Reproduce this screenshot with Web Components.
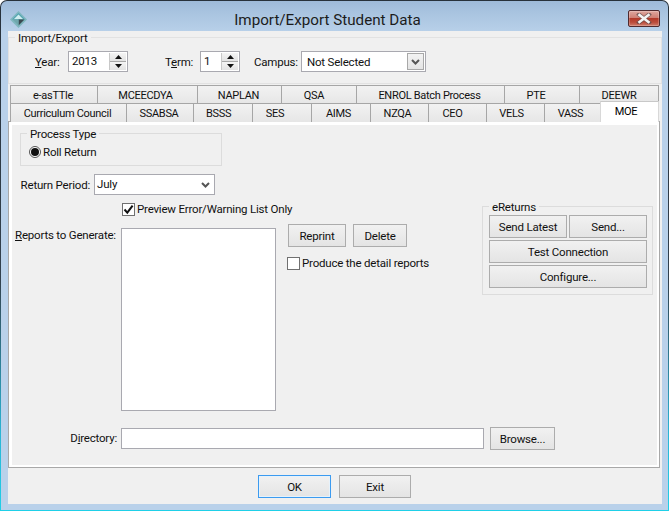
<!DOCTYPE html>
<html lang="en"><head><meta charset="utf-8"><title>Import/Export Student Data</title>
<style>
html,body{margin:0;padding:0;background:#fff}
body{font:11.5px/16px Roboto,"Open Sans",sans-serif;letter-spacing:-.2px;color:#111;width:670px;height:512px;overflow:hidden}
u{text-decoration:underline}
</style></head><body>
<x-window heading="Import/Export Student Data">
  <x-group legend="Import/Export" style="height:45px">
    <x-row style="padding:13px 0 0 26px">
      <x-label style="width:33px"><span><u>Y</u>ear:</span></x-label>
      <x-spin value="2013" style="width:60px"></x-spin>
      <x-label style="margin-left:37px;width:35px"><span>T<u>e</u>rm:</span></x-label>
      <x-spin value="1" style="width:40px"></x-spin>
      <x-label style="margin-left:14px;width:47px">Campus:</x-label>
      <x-combo value="Not Selected" boxed style="width:125px"></x-combo>
    </x-row>
  </x-group>
  <x-tabs style="margin-top:1px">
    <x-tab-row>
      <x-tab style="width:87px;padding-right:2px">e-asTTle</x-tab><x-tab style="width:100px;padding-right:4px">MCEECDYA</x-tab><x-tab style="width:84px;padding-right:2px">NAPLAN</x-tab><x-tab style="width:75px;padding-right:10px">QSA</x-tab><x-tab style="width:148px;padding-right:2px">ENROL Batch Process</x-tab><x-tab style="width:75px;padding-right:12px">PTE</x-tab><x-tab style="width:80px">DEEWR</x-tab>
    </x-tab-row>
    <x-tab-row>
      <x-tab style="width:116px;padding-right:2px">Curriculum Council</x-tab><x-tab style="width:67px;padding-right:2px">SSABSA</x-tab><x-tab style="width:59px;padding-right:9px">BSSS</x-tab><x-tab style="width:59px;padding-right:14px">SES</x-tab><x-tab style="width:59px;padding-right:5px">AIMS</x-tab><x-tab style="width:58px;padding-right:4px">NZQA</x-tab><x-tab style="width:58px;padding-right:10px">CEO</x-tab><x-tab style="width:58px;padding-right:8px">VELS</x-tab><x-tab style="width:56px;padding-right:4px">VASS</x-tab><x-tab active style="width:59px;padding-right:7px">MOE</x-tab>
    </x-tab-row>
  </x-tabs>
  <x-panel>
    <x-group legend="Process Type" style="margin:8px 0 0 8px;width:200px;height:31px;--line:#dcdcdc">
      <x-radio style="margin:11px 0 0 8px">Roll Return</x-radio>
    </x-group>
    <x-row style="margin-top:8px">
      <x-label style="width:78px;justify-content:flex-end;padding-right:4px">Return Period:</x-label>
      <x-combo value="July" style="width:121px"></x-combo>
    </x-row>
    <x-row style="margin-top:8px;align-items:flex-start">
      <x-col style="width:470px">
        <x-check checked style="margin-left:110px">Preview Error/Warning List Only</x-check>
        <x-row style="margin-top:8px;align-items:flex-start">
          <x-label style="width:106px;height:22px;padding-left:3px"><span><u>R</u>eports to Generate:</span></x-label>
          <x-box style="width:153px;height:181px;margin-top:4px"></x-box>
          <x-col style="margin-left:12px">
            <x-row>
              <x-button style="width:58px">Reprint</x-button>
              <x-button style="width:54px;margin-left:7px">Delete</x-button>
            </x-row>
            <x-check style="margin:10px 0 0 -1px">Produce the detail reports</x-check>
          </x-col>
        </x-row>
      </x-col>
      <x-group legend="eReturns" style="margin-top:3px;width:169px;height:87px;--line:#dcdcdc">
        <x-col style="padding:8px 5px 0 6px;gap:2px">
          <x-row style="gap:2px"><x-button style="width:78px">Send Latest</x-button><x-button style="width:78px">Send...</x-button></x-row>
          <x-button>Test Connection</x-button>
          <x-button>Configure...</x-button>
        </x-col>
      </x-group>
    </x-row>
    <x-row style="margin:16px 0 15px 0">
      <x-label style="width:105px;height:21px;padding-bottom:2px;justify-content:flex-end;padding-right:4px"><span>D<u>i</u>rectory:</span></x-label>
      <x-box style="width:361px;height:19px"></x-box>
      <x-button style="width:65px;margin-left:6px">Browse...</x-button>
    </x-row>
  </x-panel>
  <x-footer>
    <x-button default style="width:73px">OK</x-button>
    <x-button style="width:72px">Exit</x-button>
  </x-footer>
</x-window>
<script>
function define(name, css, html, extra){
  customElements.define(name, class extends HTMLElement{
    constructor(){
      super();
      const s=this.attachShadow({mode:"open"});
      s.innerHTML="<style>"+css+"</style>"+html;
    }
    connectedCallback(){ if(extra) extra(this,this.shadowRoot); }
  });
}
define("x-row",":host{display:flex;align-items:center}","<slot></slot>");
define("x-col",":host{display:flex;flex-direction:column}","<slot></slot>");
define("x-label",":host{display:flex;align-items:center;box-sizing:content-box;white-space:nowrap;flex:none}","<slot></slot>");

define("x-window",`
:host{display:block;box-sizing:border-box;width:669px;height:511px;padding:1px;border-radius:7px 7px 0 0;
 background:linear-gradient(#27313b 0,#33414e 55%,#2ab6d6 85%,#1fd0e8 100%)}
.frame{height:100%;box-sizing:border-box;border-radius:6px 6px 0 0;display:flex;flex-direction:column;padding:0 6px 6px 7px;
 background:linear-gradient(#9ebad9 0,#a9c4e0 12px,#b9d1ea 32px,#b9d1ea 100%)}
.bar{height:30px;flex:none;display:flex;align-items:flex-start}
.ic{flex:none;margin:10px 0 0 2px;width:17px;height:17px}
.t{flex:1;text-align:center;font-size:15.2px;letter-spacing:0;line-height:20px;margin-top:9px;color:#1c1c1c}
.x{flex:none;width:32px;height:17px;margin:9px 2px 0 0;box-sizing:border-box;border:1px solid #4f2a2e;border-radius:2px;
 background:linear-gradient(#dfa79f 0,#cf8074 45%,#b33a2a 50%,#bb4b3a 75%,#cf7d6c 100%);box-shadow:inset 0 0 0 1px rgba(255,255,255,.22);display:flex;align-items:center;justify-content:center}
.c{flex:1;background:#f0f0f0;display:flex;flex-direction:column;padding-top:6px;min-height:0}
`,`<div class="frame"><div class="bar">
<svg class="ic" viewBox="0 0 17 17"><polygon points="8.5,0 17,8.5 8.5,17 0,8.5" fill="#7fb7bf"/><polygon points="8.5,2 15,8.5 8.5,8.5 2,8.5" fill="#4fa3b0"/><polygon points="8.5,3.5 13,8 8.5,8 4,8" fill="#cfeef0"/><polygon points="8.5,8.5 14.5,8.5 8.5,14.5" fill="#3b4a52"/><polygon points="2.5,8.5 8.5,8.5 8.5,14.5" fill="#6fa7ad"/></svg>
<div class="t"></div>
<div class="x"><svg width="16" height="11" viewBox="0 0 16 11"><path d="M3 1.5 L13 9.5 M13 1.5 L3 9.5" stroke="#5a4a4a" stroke-width="4" stroke-linecap="square" opacity=".7"/><path d="M3.5 2 L12.5 9 M12.5 2 L3.5 9" stroke="#f4f4f4" stroke-width="2.6" stroke-linecap="square"/></svg></div>
</div><div class="c"><slot></slot></div></div>`,
(h,s)=>{s.querySelector(".t").textContent=h.getAttribute("heading")});

define("x-group",`:host{display:block;position:relative;box-sizing:content-box;border:1px solid var(--line,#e2e2e2)}
.l{position:absolute;left:6px;top:-7px;background:#f0f0f0;padding:0 3px;line-height:15px;white-space:nowrap}`,
`<div class="l"></div><slot></slot>`,(h,s)=>{s.querySelector(".l").textContent=h.getAttribute("legend")});

define("x-tabs",":host{display:block;margin-left:2px;position:relative;z-index:1;height:36px}","<slot></slot>");
define("x-tab-row",":host{display:flex;height:18px}","<slot></slot>");
define("x-tab",`:host{display:block;box-sizing:border-box;height:19px;flex:none;border:1px solid #a6a6a6;border-width:1px 0 0 1px;font-size:11px;letter-spacing:-.3px;
 background:linear-gradient(#f2f2f2,#e6e6e6);text-align:center;line-height:19px;white-space:nowrap;overflow:hidden}
:host(:last-child){border-right-width:1px}
:host([active]){background:#fff;height:21px;margin-top:-2px;position:relative;border-color:#d8d8d8;border-top-color:#c8c8c8;line-height:19px;color:#000}`,"<slot></slot>");
define("x-panel",`:host{display:block;box-sizing:border-box;width:652px;border:1px solid #a8a8a8;position:relative;background:#f0f0f0}
.i{border:solid #fff;border-width:3px 2px 2px 3px}`,`<div class="i"><slot></slot></div>`);

define("x-footer",":host{display:flex;justify-content:center;gap:8px;padding-top:7px;padding-right:1px}","<slot></slot>");

define("x-button",`:host{display:block;box-sizing:border-box;height:23px;flex:none;border:1px solid #acacac;background:linear-gradient(#f1f1f1,#e4e4e4);text-align:center;line-height:22px;white-space:nowrap;color:#111}
:host([default]){border-color:#3c9bf0;box-shadow:inset 0 0 0 1px #e6f2fb}`,"<slot></slot>");

define("x-box",":host{display:block;box-sizing:content-box;flex:none;border:1px solid #a9a9b0;background:#fff}","<slot></slot>");

define("x-spin",`:host{display:flex;box-sizing:border-box;height:21px;flex:none;border:1px solid #a9a9b0;background:#fff;align-items:stretch}
.v{flex:1;padding-left:3px;line-height:19px}
.b{width:16px;flex:none;display:flex;flex-direction:column;margin:1px;margin-left:0;border-left:1px solid #c8c8c8}
.b i{flex:1;display:flex;align-items:center;justify-content:center;background:linear-gradient(#f4f4f4,#e3e3e3);border-bottom:1px solid #a8a8a8}
.b i:last-child{border:0}
.b svg{display:block}`,
`<div class="v"></div><div class="b"><i><svg width="7" height="4"><path d="M3.5 0 7 4H0z" fill="#111"/></svg></i><i><svg width="7" height="4"><path d="M0 0h7L3.5 4z" fill="#111"/></svg></i></div>`,
(h,s)=>{s.querySelector(".v").textContent=h.getAttribute("value")});

define("x-combo",`:host{display:flex;box-sizing:border-box;height:21px;flex:none;border:1px solid #a9a9b0;background:#fff;align-items:stretch}
.v{flex:1;padding-left:2px;line-height:19px}
:host([boxed]) .v{padding-left:5px;line-height:20px}
.d{width:18px;flex:none;display:flex;align-items:center;justify-content:center}
:host([boxed]) .d{border:1px solid #a8a8a8;background:linear-gradient(#f3f3f3,#e4e4e4);height:17px;width:17px;box-sizing:border-box;margin:1px 1px 0 0}`,
`<div class="v"></div><div class="d"><svg width="9" height="6" viewBox="0 0 9 6"><path d="M1 1 4.5 4.5 8 1" fill="none" stroke="#555" stroke-width="2"/></svg></div>`,
(h,s)=>{s.querySelector(".v").textContent=h.getAttribute("value")});

define("x-check",`:host{display:flex;align-items:center;gap:2px;white-space:nowrap;height:13px}
.b{width:13px;height:13px;box-sizing:border-box;border:1px solid #707070;background:#fff;flex:none;display:flex;align-items:center;justify-content:center}
.w{padding-bottom:2px}
svg{display:none}:host([checked]) svg{display:block}`,
`<span class="b"><svg width="11" height="11" viewBox="0 0 11 11"><path d="M1.5 5.5 4.3 8.6 9.6 1.6" fill="none" stroke="#111" stroke-width="2"/></svg></span><span class="w"><slot></slot></span>`);

define("x-radio",`:host{display:flex;align-items:center;gap:2px;white-space:nowrap;height:14px}
.b{width:12px;height:12px;box-sizing:border-box;border:1px solid #555;border-radius:50%;background:#fff;flex:none;display:flex;align-items:center;justify-content:center}
.b i{width:8px;height:8px;border-radius:50%;background:#111}`,`<span class="b"><i></i></span><slot></slot>`);
</script>
</body></html>
